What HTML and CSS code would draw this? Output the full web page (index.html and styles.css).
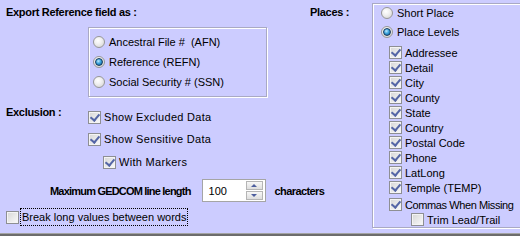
FILE: index.html
```html
<!DOCTYPE html>
<html lang="en">

<head>
    <meta charset="UTF-8">
    <title>GEDCOM Export Options</title>
    <link rel="stylesheet" href="styles.css">
</head>

<body>
    <div class="panel">
        <div class="leftCol">
            <div class="title">Export Reference field as :</div>
            <div class="group refGroup">
                <div class="opt"><span class="radio"></span>Ancestral File #&nbsp; (AFN)</div>
                <div class="opt"><span class="radio on"></span>Reference (REFN)</div>
                <div class="opt"><span class="radio"></span>Social Security # (SSN)</div>
            </div>
            <div class="exclusion">
                <div class="title exLabel">Exclusion :</div>
                <div class="exList">
                    <div class="opt"><span class="cb on"></span>Show Excluded Data</div>
                    <div class="opt"><span class="cb on"></span>Show Sensitive Data</div>
                    <div class="opt sub"><span class="cb on"></span>With Markers</div>
                </div>
            </div>
            <div class="lineLen">
                <div class="title lenLabel">Maximum GEDCOM line length</div>
                <div class="spin">
                    <span class="spinVal">100</span>
                    <div class="spinBtns">
                        <span class="sb up"></span>
                        <span class="sb down"></span>
                    </div>
                </div>
                <div class="title chars">characters</div>
            </div>
            <div class="opt breakRow"><span class="cb"></span><span class="focus">Break long values between words</span></div>
        </div>
        <div class="title placesLabel">Places :</div>
        <div class="group placeGroup">
            <div class="opt"><span class="radio"></span>Short Place</div>
            <div class="opt"><span class="radio on"></span>Place Levels</div>
            <div class="levels">
                <div class="row"><span class="cb on"></span>Addressee</div>
                <div class="row"><span class="cb on"></span>Detail</div>
                <div class="row"><span class="cb on"></span>City</div>
                <div class="row"><span class="cb on"></span>County</div>
                <div class="row"><span class="cb on"></span>State</div>
                <div class="row"><span class="cb on"></span>Country</div>
                <div class="row"><span class="cb on"></span>Postal Code</div>
                <div class="row"><span class="cb on"></span>Phone</div>
                <div class="row"><span class="cb on"></span>LatLong</div>
                <div class="row"><span class="cb on"></span>Temple (TEMP)</div>
                <div class="row gapTop tight"><span class="cb on"></span>Commas When Missing</div>
                <div class="row trim"><span class="cb"></span>Trim Lead/Trail</div>
            </div>
        </div>
    </div>
    <div class="bottomBar"></div>
</body>

</html>
```

FILE: styles.css
```css
* {
    margin: 0;
    padding: 0;
    box-sizing: border-box;
}

body {
    width: 520px;
    height: 236px;
    overflow: hidden;
    background-color: #ccccff;
    font-family: "Liberation Sans", Arial, sans-serif;
    font-size: 11px;
    color: #000;
}

.panel {
    display: flex;
    height: 233px;
}

.leftCol {
    width: 306px;
    flex: none;
}

.title {
    font-weight: bold;
    line-height: 14px;
    letter-spacing: -0.3px;
    white-space: nowrap;
}

.leftCol > .title {
    padding: 5px 0 0 6px;
}

.group {
    border: 1px solid #a9a9c4;
    box-shadow: inset 1px 1px 0 #fff, 1px 1px 0 #fff;
}

.refGroup {
    margin: 8px 0 0 88px;
    width: 179px;
    height: 70px;
    padding-top: 4px;
}

.opt {
    display: flex;
    align-items: center;
    height: 20px;
    white-space: nowrap;
}

.refGroup .opt {
    padding-left: 4px;
}

/* radio buttons */
.radio {
    width: 12px;
    height: 12px;
    margin-right: 4px;
    border: 1px solid #979797;
    border-radius: 50%;
    background: radial-gradient(circle at 40% 35%, #fff 0%, #f0f0f0 40%, #cfcfcf 100%);
    display: flex;
    align-items: center;
    justify-content: center;
    flex: none;
}

.radio.on::after {
    content: "";
    width: 6px;
    height: 6px;
    border-radius: 50%;
    border: 1px solid #173a5e;
    background: radial-gradient(circle at 40% 35%, #bfeaff 0%, #3aa3dc 45%, #0b4f8c 100%);
}

/* check boxes */
.cb {
    width: 13px;
    height: 13px;
    margin-right: 3px;
    border: 1px solid #8e8f93;
    background: linear-gradient(135deg, #d6d6d6 0%, #ececec 60%, #fafafa 100%);
    box-shadow: inset 0 0 0 1px #f4f4f4;
    display: flex;
    align-items: center;
    justify-content: center;
    flex: none;
}

.cb.on::after {
    content: "";
    width: 4px;
    height: 7px;
    margin-top: -2px;
    border-right: 2px solid #5566a6;
    border-bottom: 2px solid #5566a6;
    transform: rotate(40deg);
}

.exclusion {
    display: flex;
    margin-top: 8px;
}

.exLabel {
    width: 88px;
    padding-left: 6px;
}

.exList .opt {
    height: 22px;
    letter-spacing: 0.3px;
}

.exList .opt:first-child {
    margin-top: 1px;
}

.exList .sub {
    padding-left: 15px;
    margin-top: 1px;
}

.lineLen {
    display: flex;
    align-items: center;
    margin-top: 6px;
    padding-left: 50px;
}

.lenLabel {
    letter-spacing: -0.8px;
}

.spin {
    display: flex;
    align-items: center;
    justify-content: space-between;
    width: 64px;
    height: 23px;
    margin-left: 11px;
    padding: 0 2px 0 6px;
    background-color: #fff;
    border: 1px solid #a5a5a5;
    flex: none;
}

.spinBtns {
    display: flex;
    flex-direction: column;
    gap: 1px;
}

.sb {
    width: 17px;
    height: 9px;
    border: 1px solid #b5b5b5;
    background: linear-gradient(#f7f7f7, #dedede);
    display: flex;
    align-items: center;
    justify-content: center;
}

.sb::after {
    content: "";
    border-left: 3px solid transparent;
    border-right: 3px solid transparent;
}

.sb.up::after {
    border-bottom: 3px solid #4d5e9e;
}

.sb.down::after {
    border-top: 3px solid #4d5e9e;
}

.chars {
    margin-left: 9px;
    letter-spacing: -0.6px;
}

.breakRow {
    margin-top: 6px;
    padding-left: 6px;
    height: 18px;
}

.breakRow .cb {
    margin-right: 1px;
}

.focus {
    border: 1px dotted #000;
    padding: 1px;
    line-height: 14px;
}

.placesLabel {
    width: 66px;
    padding: 5px 0 0 4px;
}

.placeGroup {
    flex: 1;
    margin-top: 3px;
    height: 225px;
    border-right: none;
    padding: 0 0 0 8px;
}

.placeGroup > .opt {
    height: 19px;
}

.placeGroup > .opt:first-child {
    height: 18px;
}

.levels {
    margin-top: 4px;
    padding-left: 8px;
}

.row {
    display: flex;
    align-items: center;
    height: 15px;
    white-space: nowrap;
}

.row.gapTop {
    margin-top: 2px;
}

.row.tight {
    letter-spacing: -0.4px;
}

.row.trim {
    padding-left: 22px;
}

.bottomBar {
    height: 3px;
    border-top: 1px solid #a3a3a3;
    background-color: #6c6c6c;
}
```
